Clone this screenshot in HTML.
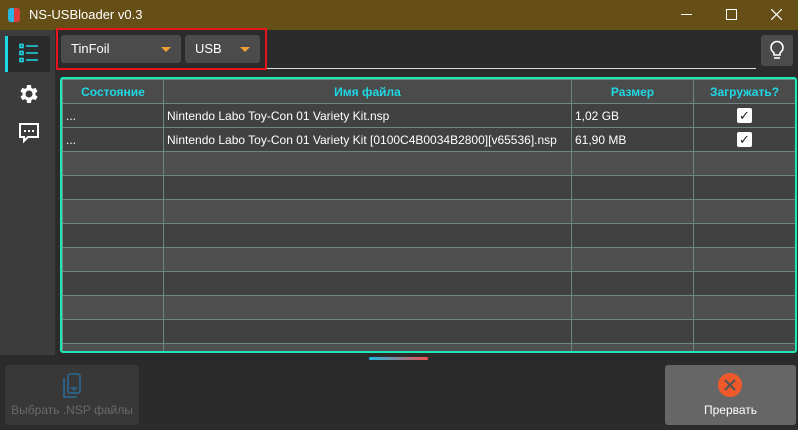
<!DOCTYPE html>
<html><head><style>
body{margin:0;width:798px;height:430px;background:#2b2b2b;font-family:"Liberation Sans","DejaVu Sans",sans-serif;overflow:hidden;position:relative}
.a{position:absolute}
.title{left:0;top:0;width:798px;height:30px;background:#654f17;color:#fff;font-size:13px}
.side{left:0;top:30px;width:55px;height:325px;background:#3c3c3c}
table{border-collapse:collapse;font-size:12px;color:#fff;table-layout:fixed}
td,th{border:1px solid #6e8683;height:23px;padding:0 3px;white-space:nowrap;overflow:hidden}
th{color:#1fd8e6;background:#4b4b4b;font-weight:bold}
tr.d td{background:#414141}tr.l td{background:#4f4f4f}
.cb{display:inline-block;width:15px;height:15px;background:#fff;border-radius:2px;color:#222;font-size:13px;line-height:15px;text-align:center;font-weight:bold;vertical-align:middle}
.dd{background:#4b4b4b;border-radius:3px;color:#fff;font-size:13px;height:28px;line-height:28px;padding-left:10px;box-sizing:border-box}
.tri{position:absolute;right:10px;top:12px;border-left:5px solid transparent;border-right:5px solid transparent;border-top:5px solid #f0a030}
</style></head><body>
<div class="a title">
 <div class="a" style="left:8px;top:8px;width:6px;height:14px;background:#2bb5e3;border-radius:3px 0 0 3px"></div>
 <div class="a" style="left:14px;top:8px;width:6px;height:14px;background:#e03a3a;border-radius:0 3px 3px 0"></div>
 <div class="a" style="left:29px;top:7px">NS-USBloader v0.3</div>
 <div class="a" style="left:681px;top:14px;width:11px;height:1px;background:#fff"></div>
 <div class="a" style="left:726px;top:9px;width:9px;height:9px;border:1px solid #fff"></div>
 <svg class="a" style="left:771px;top:9px" width="11" height="11" stroke="#fff" stroke-width="1.2"><path d="M0 0L11 11M11 0L0 11"/></svg>
</div>
<div class="a side"></div>
<div class="a" style="left:5px;top:36px;width:45px;height:36px;background:#2b2b2b"></div>
<div class="a" style="left:5px;top:36px;width:3px;height:36px;background:#1fd8e6"></div>
<svg class="a" style="left:19px;top:43px" width="20" height="21" fill="none" stroke="#1fd8e6" stroke-width="1.6"><rect x="1" y="1.5" width="3" height="3"/><rect x="1" y="8.5" width="3" height="3"/><rect x="1" y="15.5" width="3" height="3"/><path d="M7 3H19M7 10H19M7 17H19"/></svg>
<svg class="a" style="left:17px;top:82px" width="24" height="24" viewBox="0 0 24 24"><path fill="#fff" d="M19.4 13a7.7 7.7 0 000-2l2.1-1.6-2-3.5-2.5 1a7 7 0 00-1.7-1L15 3h-4l-.4 2.9a7 7 0 00-1.7 1l-2.5-1-2 3.5L6.6 11a7.7 7.7 0 000 2l-2.1 1.6 2 3.5 2.5-1a7 7 0 001.7 1L11 21h4l.4-2.9a7 7 0 001.7-1l2.5 1 2-3.5zM13 15.5a3.5 3.5 0 110-7 3.5 3.5 0 010 7z" transform="translate(-1 0)"/></svg>
<svg class="a" style="left:18px;top:122px" width="22" height="22"><path d="M2 2H20V15H10L6 19V15H2Z" fill="none" stroke="#fff" stroke-width="2"/><rect x="6" y="8" width="2" height="2" fill="#fff"/><rect x="10" y="8" width="2" height="2" fill="#fff"/><rect x="14" y="8" width="2" height="2" fill="#fff"/></svg>
<div class="a" style="left:56px;top:28px;width:211px;height:42px;border:2px solid #e8141e;box-sizing:border-box"></div>
<div class="a dd" style="left:61px;top:35px;width:120px">TinFoil<div class="tri"></div></div>
<div class="a dd" style="left:185px;top:35px;width:75px">USB<div class="tri"></div></div>
<div class="a" style="left:267px;top:68px;width:489px;height:1px;background:#ddd"></div>
<div class="a" style="left:761px;top:35px;width:32px;height:31px;background:#4b4b4b;border-radius:3px"></div>
<svg class="a" style="left:768px;top:40px" width="18" height="20" fill="none" stroke="#fff" stroke-width="1.6"><path d="M6 13C4 11 3 10 3 7.5a6 6 0 0112 0c0 2.5-1 3.5-3 5.5V15H6Z"/><path d="M6 18H12"/></svg>
<div class="a" style="left:60px;top:77px;width:737px;height:276px;border:2px solid #1de9b6;border-radius:3px;box-sizing:border-box;overflow:hidden;background:#414141">
<table style="width:733px">
<colgroup><col style="width:101px"><col style="width:408px"><col style="width:122px"><col style="width:102px"></colgroup>
<tr><th>Состояние</th><th>Имя файла</th><th>Размер</th><th>Загружать?</th></tr>
<tr class="d"><td>...</td><td>Nintendo Labo Toy-Con 01 Variety Kit.nsp</td><td>1,02 GB</td><td style="text-align:center"><span class="cb">✓</span></td></tr>
<tr class="d"><td>...</td><td>Nintendo Labo Toy-Con 01 Variety Kit [0100C4B0034B2800][v65536].nsp</td><td>61,90 MB</td><td style="text-align:center"><span class="cb">✓</span></td></tr>
<tr class="l"><td></td><td></td><td></td><td></td></tr>
<tr class="d"><td></td><td></td><td></td><td></td></tr>
<tr class="l"><td></td><td></td><td></td><td></td></tr>
<tr class="d"><td></td><td></td><td></td><td></td></tr>
<tr class="l"><td></td><td></td><td></td><td></td></tr>
<tr class="d"><td></td><td></td><td></td><td></td></tr>
<tr class="l"><td></td><td></td><td></td><td></td></tr>
<tr class="d"><td></td><td></td><td></td><td></td></tr>
<tr class="l"><td></td><td></td><td></td><td></td></tr>
</table></div>
<div class="a" style="left:369px;top:357px;width:59px;height:3px;background:linear-gradient(90deg,#1fbbe6,#f05050);border-radius:2px"></div>
<div class="a" style="left:5px;top:365px;width:134px;height:60px;background:#383838;border-radius:3px;color:#6a6a6a;font-size:12px;text-align:center">
<svg style="position:absolute;left:56px;top:8px" width="22" height="26" fill="none" stroke="#2e5e80" stroke-width="2"><path d="M3 5V24H16"/><rect x="7" y="1" width="12" height="19" rx="2"/><path d="M11 15h4l-2 2z" fill="#2e5e80"/></svg>
<div style="position:absolute;top:38px;width:100%">Выбрать .NSP файлы</div></div>
<div class="a" style="left:665px;top:365px;width:131px;height:60px;background:#666;border-radius:3px;color:#fff;font-size:12px;text-align:center">
<div style="position:absolute;left:53px;top:8px;width:24px;height:24px;border-radius:12px;background:#f05a2a"></div>
<svg style="position:absolute;left:59px;top:14px" width="12" height="12" stroke="#555" stroke-width="2.2"><path d="M1 1L11 11M11 1L1 11"/></svg>
<div style="position:absolute;top:38px;width:100%">Прервать</div></div>
</body></html>
